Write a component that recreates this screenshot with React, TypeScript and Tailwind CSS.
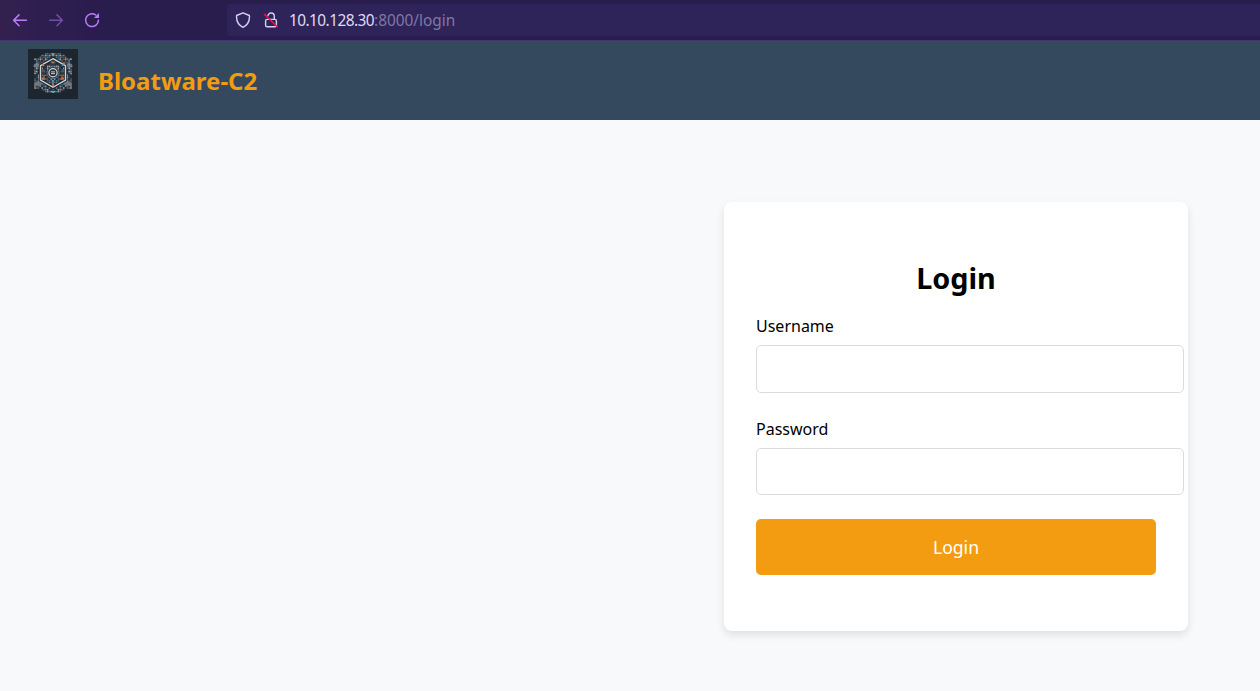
import React from "react";

const palette = ["#75838c", "#3a6f8a", "#27323d", "#9d5b41", "#4d6474", "#9aa3a6", "#33424f", "#222c37"];

function mosaic() {
  const tiles: React.ReactElement[] = [];
  for (let row = 0; row < 22; row++) {
    for (let col = 0; col <= 11; col++) {
      const y = 4 + row * 1.8;
      const d = col * 1.8;
      const limit = row < 3 || row > 19 ? 8 + Math.min(row, 21 - row) * 3 : 18.5;
      if (d > limit) continue;
      const fill = palette[(row * 5 + col * 3 + ((row * col) % 5)) % palette.length];
      tiles.push(<rect key={`l${row}-${col}`} x={24.2 - d} y={y} width="1.6" height="1.6" fill={fill} />);
      if (col > 0) {
        tiles.push(<rect key={`r${row}-${col}`} x={24.2 + d} y={y} width="1.6" height="1.6" fill={fill} />);
      }
    }
  }
  return tiles;
}

function Logo() {
  return (
    <svg width="50" height="50" viewBox="0 0 50 50" className="block shrink-0">
      <rect width="50" height="50" fill="#1d252f" />
      {mosaic()}
      <g fill="#77858f" fillOpacity="0.8">
        <path d="M5.5 16 9 13.5 12 16 9 19 5.5 18ZM44.5 16 41 13.5 38 16 41 19 44.5 18Z" />
        <path d="M6 34 10 31.5 15 34 12 37.5 7 37ZM44 34 40 31.5 35 34 38 37.5 43 37Z" />
      </g>
      <path d="M25 9.7 37.5 16.7V31L25 38.3 12.5 31V16.7Z" fill="none" stroke="#1d2833" strokeWidth="3.2" />
      <path d="M25 9.7 37.5 16.7V31L25 38.3 12.5 31V16.7Z" fill="none" stroke="#d0d6d8" strokeWidth="1.4" />
      <circle cx="25" cy="23.7" r="6" fill="#2a3541" stroke="#687d8b" strokeWidth="0.7" />
      <circle cx="25" cy="23.7" r="4.1" fill="#222c37" stroke="#ced5d8" strokeWidth="1.2" />
      <path d="M23 22.9h4M23 24.7h4" stroke="#d2d9dc" strokeWidth="1" />
      <g fill="#da6935">
        <rect x="14.2" y="15.2" width="2" height="2" />
        <rect x="13.5" y="28.5" width="2.4" height="2.4" />
        <rect x="34" y="28.5" width="2" height="2" />
        <rect x="24" y="34.5" width="2" height="2.4" />
        <rect x="24" y="12.5" width="1.8" height="1.8" />
        <rect x="35" y="13.5" width="1.8" height="1.8" />
      </g>
      <g fill="#55a0bd">
        <rect x="24" y="4" width="2" height="2" />
        <rect x="33.8" y="15" width="1.8" height="1.8" />
        <rect x="24" y="42" width="2" height="2" />
        <rect x="24" y="31" width="1.8" height="1.8" />
      </g>
    </svg>
  );
}

function BrowserBar() {
  return (
    <div className="flex h-10 shrink-0 items-center bg-[linear-gradient(90deg,#33204f_0px,#2d1e50_50px,#291d4d_110px)]">
      <div className="flex w-[227px] shrink-0 items-center gap-5 pl-3 text-[#bd7cf8]">
        <svg width="16" height="16" viewBox="0 0 16 16" fill="none" stroke="currentColor" strokeWidth="1.5" strokeLinecap="round" strokeLinejoin="round">
          <path d="M14.4 8.3H1.6M7 2.9 1.6 8.3 7 13.7" />
        </svg>
        <svg width="16" height="16" viewBox="0 0 16 16" fill="none" stroke="currentColor" strokeWidth="1.5" strokeLinecap="round" strokeLinejoin="round" className="opacity-50">
          <path d="M1.6 8.3h12.8M9 2.9l5.4 5.4L9 13.7" />
        </svg>
        <svg width="16" height="16" viewBox="0 0 16 16" fill="none" stroke="currentColor" strokeWidth="1.5" strokeLinecap="round">
          <path d="M11.8 3A6.4 6.4 0 1 0 14.4 8.2" />
          <path d="M15 1v5H10Z" fill="currentColor" stroke="none" />
        </svg>
      </div>
      <div className="flex h-8 flex-1 items-center rounded-l bg-[#2e2459] pl-2 text-[#d8cdf0]">
        <svg width="16" height="16" viewBox="0 0 16 16" fill="none" stroke="currentColor" strokeWidth="1.4" strokeLinejoin="round">
          <path d="M8 .8 14.4 3.5C14.8 8.5 12.5 13 8 15.3 3.5 13 1.2 8.5 1.6 3.5Z" />
        </svg>
        <svg width="16" height="16" viewBox="0 0 16 16" fill="none" className="ml-3">
          <rect x="2.6" y="7.4" width="10.8" height="7.4" rx="1.5" stroke="currentColor" strokeWidth="1.4" />
          <path d="M4.9 4.2A3.2 3.2 0 0 1 11.3 4.2V7.2" stroke="currentColor" strokeWidth="1.4" />
          <path d="m1.4 2.2 12.9 12.5" stroke="#ee1747" strokeWidth="1.5" strokeLinecap="round" />
        </svg>
        <span className="ml-[10px] pt-0.5 text-[15.4px] leading-5 text-[#8176a5]">
          <span className="tracking-[-0.55px] text-[#e1d9f5]">10.10.128.30</span>:8000/login
        </span>
      </div>
    </div>
  );
}

function Field({ id, label, type, inputClass }: { id: string; label: string; type: string; inputClass: string }) {
  return (
    <div className="flex flex-col">
      <label htmlFor={id} className="mb-2 text-base leading-[22px]">{label}</label>
      <input id={id} type={type} className={`w-[428px] rounded-[5px] border border-[#dcdcdc] bg-white px-3 outline-none ${inputClass}`} />
    </div>
  );
}

export default function App() {
  return (
    <div className="flex h-[691px] w-full flex-col overflow-hidden bg-[#f8f9fb] font-['Noto_Sans',sans-serif] text-black">
      <BrowserBar />
      <header className="flex h-20 shrink-0 items-start border-t border-[#43336f] bg-[#34495e] pt-2 pl-7">
        <Logo />
        <span className="ml-5 pt-4 text-2xl leading-8 font-bold text-[#f39c12]">Bloatware-C2</span>
      </header>
      <main className="flex flex-1 items-start justify-end pt-[82px] pr-[72px]">
        <form className="flex h-[429px] w-[464px] flex-col rounded-lg bg-white px-8 pt-14 shadow-[0_4px_8px_rgba(0,0,0,0.1)]" onSubmit={(e) => e.preventDefault()}>
          <h1 className="mb-[17px] text-center text-[28.8px] leading-10 font-bold">Login</h1>
          <Field id="username" label="Username" type="text" inputClass="h-12" />
          <div className="h-[25px]" />
          <Field id="password" label="Password" type="password" inputClass="h-[47px]" />
          <button type="submit" className="mt-6 h-14 w-full rounded-[5px] bg-[#f39c12] text-[17.6px] text-white">Login</button>
        </form>
      </main>
    </div>
  );
}
